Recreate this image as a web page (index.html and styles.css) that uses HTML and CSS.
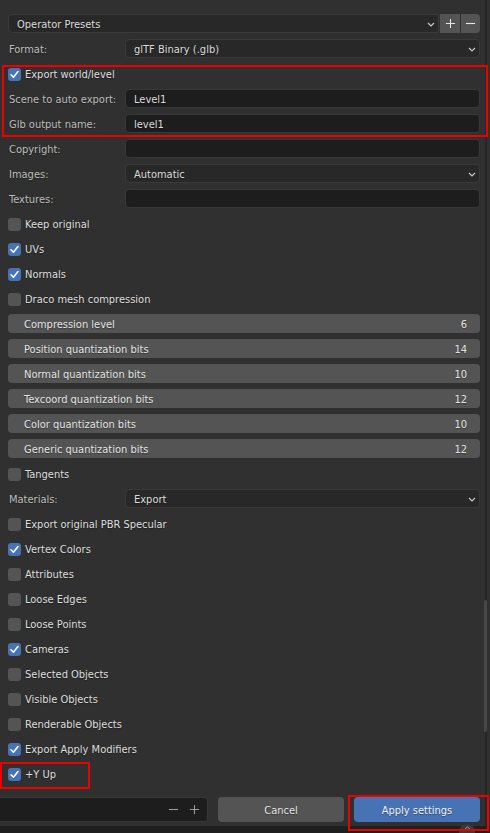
FILE: index.html
```html
<!DOCTYPE html>
<html>
<head>
<meta charset="utf-8">
<link rel="stylesheet" href="styles.css">
</head>
<body>
<div class="app">
  <div class="panel">
    <div class="row presets">
      <div class="select presets-select"><span>Operator Presets</span><svg class="chev" viewBox="0 0 8 5"><path d="M1 1 L4 4 L7 1"/></svg></div>
      <div class="pm">
        <div class="pm-btn"><svg viewBox="0 0 12 12"><path d="M6 1 V11 M1 6 H11"/></svg></div>
        <div class="pm-btn"><svg viewBox="0 0 12 12"><path d="M1 6 H11"/></svg></div>
      </div>
    </div>
    <div class="row prop"><span class="label">Format:</span><div class="select"><span>glTF Binary (.glb)</span><svg class="chev" viewBox="0 0 8 5"><path d="M1 1 L4 4 L7 1"/></svg></div></div>
    <div class="row check"><span class="cb on"><svg viewBox="0 0 13 13"><path d="M3 6.8 L5.4 9.2 L10 3.6"/></svg></span>Export world/level</div>
    <div class="row prop"><span class="label">Scene to auto export:</span><div class="field">Level1</div></div>
    <div class="row prop"><span class="label">Glb output name:</span><div class="field">level1</div></div>
    <div class="row prop"><span class="label">Copyright:</span><div class="field"></div></div>
    <div class="row prop"><span class="label">Images:</span><div class="select"><span>Automatic</span><svg class="chev" viewBox="0 0 8 5"><path d="M1 1 L4 4 L7 1"/></svg></div></div>
    <div class="row prop"><span class="label">Textures:</span><div class="field"></div></div>
    <div class="row check"><span class="cb"></span>Keep original</div>
    <div class="row check"><span class="cb on"><svg viewBox="0 0 13 13"><path d="M3 6.8 L5.4 9.2 L10 3.6"/></svg></span>UVs</div>
    <div class="row check"><span class="cb on"><svg viewBox="0 0 13 13"><path d="M3 6.8 L5.4 9.2 L10 3.6"/></svg></span>Normals</div>
    <div class="row check"><span class="cb"></span>Draco mesh compression</div>
    <div class="row slider"><span>Compression level</span><span>6</span></div>
    <div class="row slider"><span>Position quantization bits</span><span>14</span></div>
    <div class="row slider"><span>Normal quantization bits</span><span>10</span></div>
    <div class="row slider"><span>Texcoord quantization bits</span><span>12</span></div>
    <div class="row slider"><span>Color quantization bits</span><span>10</span></div>
    <div class="row slider"><span>Generic quantization bits</span><span>12</span></div>
    <div class="row check"><span class="cb"></span>Tangents</div>
    <div class="row prop"><span class="label">Materials:</span><div class="select"><span>Export</span><svg class="chev" viewBox="0 0 8 5"><path d="M1 1 L4 4 L7 1"/></svg></div></div>
    <div class="row check"><span class="cb"></span>Export original PBR Specular</div>
    <div class="row check"><span class="cb on"><svg viewBox="0 0 13 13"><path d="M3 6.8 L5.4 9.2 L10 3.6"/></svg></span>Vertex Colors</div>
    <div class="row check"><span class="cb"></span>Attributes</div>
    <div class="row check"><span class="cb"></span>Loose Edges</div>
    <div class="row check"><span class="cb"></span>Loose Points</div>
    <div class="row check"><span class="cb on"><svg viewBox="0 0 13 13"><path d="M3 6.8 L5.4 9.2 L10 3.6"/></svg></span>Cameras</div>
    <div class="row check"><span class="cb"></span>Selected Objects</div>
    <div class="row check"><span class="cb"></span>Visible Objects</div>
    <div class="row check"><span class="cb"></span>Renderable Objects</div>
    <div class="row check"><span class="cb on"><svg viewBox="0 0 13 13"><path d="M3 6.8 L5.4 9.2 L10 3.6"/></svg></span>Export Apply Modifiers</div>
    <div class="row check"><span class="cb on"><svg viewBox="0 0 13 13"><path d="M3 6.8 L5.4 9.2 L10 3.6"/></svg></span>+Y Up</div>
  </div>
  <div class="footer">
    <div class="filebox">
      <svg viewBox="0 0 12 12"><path d="M1 6 H11"/></svg>
      <svg viewBox="0 0 12 12"><path d="M6 1 V11 M1 6 H11"/></svg>
    </div>
    <div class="btn">Cancel</div>
    <div class="btn primary">Apply settings</div>
  </div>
  <div class="strip"></div>

  <div class="scroll-edge"></div>
  <div class="scroll-thumb"></div>
  <div class="collapse"><svg viewBox="0 0 8 5"><path d="M1 4 L4 1 L7 4"/></svg></div>
  <div class="mark mark-export"></div>
  <div class="mark mark-yup"></div>
  <div class="mark mark-apply"></div>
</div>
</body>
</html>
```

FILE: styles.css
```css
* { box-sizing: border-box; }
html, body { margin: 0; padding: 0; background: #303030; }
body {
  font-family: "DejaVu Sans Condensed", "DejaVu Sans", sans-serif;
  font-size: 11px;
  color: #dcdcdc;
}
.app {
  position: relative;
  width: 490px;
  height: 833px;
  overflow: hidden;
  background: #303030;
  display: flex;
  flex-direction: column;
}
.panel {
  display: flex;
  flex-direction: column;
  gap: 6px;
  padding: 14px 10px 0 8px;
}
.row {
  height: 19px;
  display: flex;
  align-items: center;
}
.presets { gap: 1px; }
.select, .field {
  height: 19px;
  border-radius: 4px;
  display: flex;
  align-items: center;
  padding-left: 8px;
  padding-top: 2px;
  color: #dcdcdc;
  text-shadow: 0 1px 1px rgba(0,0,0,0.35);
}
.select {
  background: #282828;
  border: 1px solid #3a3a3a;
  justify-content: space-between;
  padding-right: 3px;
}
.presets-select { flex: 1; border-radius: 4px 0 0 4px; }
.field {
  background: #1d1d1d;
  border: 1px solid #383838;
}
.chev { width: 8px; height: 5px; fill: none; stroke: #c8c8c8; stroke-width: 1.2; }
.pm { display: flex; gap: 1px; }
.pm-btn {
  width: 20px;
  height: 19px;
  background: #545454;
  display: flex;
  align-items: center;
  justify-content: center;
}
.pm-btn:last-child { border-radius: 0 4px 4px 0; width: 19px; }
.pm-btn svg { width: 11px; height: 11px; fill: none; stroke: #e6e6e6; stroke-width: 1.2; }
.prop {
  display: grid;
  grid-template-columns: 117px 1fr;
  align-items: center;
}
.label { padding-left: 1px; padding-top: 2px; color: #bdbdbd; text-shadow: 0 1px 1px rgba(0,0,0,0.35); }
.check { gap: 4px; padding-top: 2px; color: #dedede; text-shadow: 0 1px 1px rgba(0,0,0,0.35); }
.cb {
  width: 13px;
  height: 13px;
  border-radius: 3px;
  background: #545454;
  flex: none;
  display: flex;
}
.cb.on { background: #4772b3; }
.cb svg { width: 13px; height: 13px; fill: none; stroke: #ffffff; stroke-width: 1.6; stroke-linecap: round; stroke-linejoin: round; }
.slider {
  background: #545454;
  border-radius: 4px;
  justify-content: space-between;
  padding: 2px 13px 0 16px;
  color: #e4e4e4;
  text-shadow: 0 1px 1px rgba(0,0,0,0.35);
}
.footer {
  margin-top: 14px;
  height: 25px;
  display: flex;
  gap: 10px;
  padding-right: 10px;
}
.filebox {
  width: 208px;
  background: #1d1d1d;
  border: 1px solid #363636;
  border-left: none;
  border-radius: 0 4px 4px 0;
  display: flex;
  justify-content: flex-end;
  align-items: center;
  gap: 10px;
  padding-right: 7px;
}
.filebox svg { width: 11px; height: 11px; fill: none; stroke: #9a9a9a; stroke-width: 1.2; }
.btn {
  width: 126px;
  background: #545454;
  border-radius: 4px;
  display: flex;
  align-items: center;
  justify-content: center;
  padding-top: 2px;
  color: #e4e4e4;
  text-shadow: 0 1px 1px rgba(0,0,0,0.35);
}
.btn.primary { background: #4772b3; color: #f2f2f2; }
.strip {
  margin-top: 4px;
  flex: 1;
  background: #1f1f1f;
}
.scroll-edge {
  position: absolute;
  left: 485px;
  top: 0;
  width: 2px;
  height: 826px;
  background: #262626;
}
.scroll-thumb {
  position: absolute;
  left: 484px;
  top: 600px;
  width: 3px;
  height: 132px;
  border-radius: 2px;
  background: #474747;
}
.collapse {
  position: absolute;
  left: 459px;
  top: 824px;
  width: 16px;
  height: 12px;
  border-radius: 8px 8px 0 0;
  background: #3a3a3a;
  display: flex;
  justify-content: center;
  padding-top: 2px;
}
.collapse svg { width: 7px; height: 4px; fill: none; stroke: #bbbbbb; stroke-width: 1.1; }
.mark {
  position: absolute;
  border: 2px solid #ee0000;
}
.mark-export { left: 2px; top: 65px; width: 486px; height: 72px; }
.mark-yup { left: 0; top: 762px; width: 90px; height: 27px; }
.mark-apply { left: 348px; top: 795px; width: 141px; height: 36px; }
```
